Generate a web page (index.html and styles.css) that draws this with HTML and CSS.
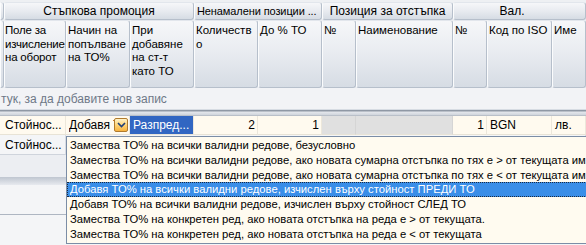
FILE: index.html
```html
<!DOCTYPE html>
<html lang="bg">
<head>
    <meta charset="UTF-8">
    <title>Стъпкова промоция</title>
    <link rel="stylesheet" href="styles.css">
</head>
<body>

    <div class="grid">
        <!-- групи колони -->
        <div class="band ind"></div>
        <div class="band span3">Стъпкова промоция</div>
        <div class="band span2 left">Ненамалени позиции ...</div>
        <div class="band span2">Позиция за отстъпка</div>
        <div class="band span3 val">Вал.</div>

        <!-- колони -->
        <div class="head ind"></div>
        <div class="head tight">Поле за<br>изчисление<br>на оборот</div>
        <div class="head">Начин на<br>попълване<br>на ТО%</div>
        <div class="head">При<br>добавяне<br>на ст-т<br>като ТО</div>
        <div class="head">Количеств<br>о</div>
        <div class="head">До % ТО</div>
        <div class="head">№</div>
        <div class="head">Наименование</div>
        <div class="head">№</div>
        <div class="head">Код по ISO</div>
        <div class="head">Име</div>

        <div class="newrow">тук, за да добавите нов запис</div>
        <div class="sep"></div>

        <!-- ред 1 -->
        <div class="cell"></div>
        <div class="cell first">Стойнос...</div>
        <div class="cell combo">
            <span class="combo-text">Добавя ТО%</span>
            <span class="combo-btn">
                <svg width="9" height="6" viewBox="0 0 9 6"><path d="M1 1 L4.5 4.5 L8 1" fill="none" stroke="#1e3f7a" stroke-width="1.6"/></svg>
            </span>
        </div>
        <div class="cell selected">Разпред...</div>
        <div class="cell num">2</div>
        <div class="cell num">1</div>
        <div class="cell off"></div>
        <div class="cell off"></div>
        <div class="cell num">1</div>
        <div class="cell">BGN</div>
        <div class="cell">лв.</div>

        <!-- ред 2 -->
        <div class="cell r2"></div>
        <div class="cell r2 first">Стойнос...</div>
        <div class="cell r2 rest"></div>

        <div class="footer">
            <div class="f1"></div>
            <div class="f2"></div>
            <div class="f3"></div>
            <div class="f4"></div>
        </div>

        <!-- падащ списък -->
        <div class="popup">
            <div class="item">Замества ТО% на всички валидни редове, безусловно</div>
            <div class="item">Замества ТО% на всички валидни редове, ако новата сумарна отстъпка по тях е &gt; от текущата им</div>
            <div class="item">Замества ТО% на всички валидни редове, ако новата сумарна отстъпка по тях е &lt; от текущата им</div>
            <div class="item active">Добавя ТО% на всички валидни редове, изчислен върху стойност ПРЕДИ ТО</div>
            <div class="item">Добавя ТО% на всички валидни редове, изчислен върху стойност СЛЕД ТО</div>
            <div class="item">Замества ТО% на конкретен ред, ако новата отстъпка на реда е &gt; от текущата.</div>
            <div class="item">Замества ТО% на конкретен ред, ако новата отстъпка на реда е &lt; от текущата</div>
        </div>
    </div>

</body>
</html>
```

FILE: styles.css
```css
/* Грид в стил DevExpress */
body {
    margin: 0;
    background-color: #eef0f3;
    font-family: "Liberation Sans", Arial, sans-serif;
    font-size: 12px;
    color: #000;
}

.grid {
    position: relative;
    width: 586px;
    height: 245px;
    overflow: hidden;
    display: grid;
    grid-template-columns: 4px 62px 64px 64px 64px 64px 34px 97px 34px 65px 34px;
    grid-template-rows: 20px 68px 22px 6px 19px 20px 1fr;
    background-color: #eef0f3;
}

/* заглавия */
.band,
.head {
    box-sizing: border-box;
    background: linear-gradient(to bottom, #f6f7f9 0%, #e8ebf0 50%, #d6dce4 100%);
    border: 1px solid #b6bfcb;
    border-top-color: #e2e6ec;
    border-left-color: #fbfcfd;
    border-radius: 3px;
    overflow: hidden;
    white-space: nowrap;
}

.band {
    margin-top: 2px;
    text-align: center;
    line-height: 16px;
}

.band.left {
    text-align: left;
    padding-left: 2px;
    font-size: 11px;
    letter-spacing: -0.1px;
}

.band.val {
    padding-right: 15px;
}

.span3 { grid-column: span 3; }
.span2 { grid-column: span 2; }

.head {
    padding: 3px 0 0 1px;
    line-height: 13.5px;
    font-size: 11.5px;
}

.head.tight {
    padding-left: 0;
    letter-spacing: -0.2px;
}

.ind {
    border-radius: 0 3px 3px 0;
}

.newrow {
    grid-column: 1 / -1;
    background-color: #f2f3f6;
    color: #6e7887;
    line-height: 22px;
    padding-left: 1px;
    border-bottom: 1px solid #d7dce3;
}

.sep {
    grid-column: 1 / -1;
    background: linear-gradient(to bottom, #8f98a5 0px, #8f98a5 1px, #e4e7ec 2px, #cfd4dc 5px, #a4acb7 6px);
}

/* редове */
.cell {
    background-color: #fffaef;
    border-right: 1px solid #ece7db;
    border-bottom: 1px solid #e8e3d6;
    padding: 0 2px 0 3px;
    line-height: 19px;
    white-space: nowrap;
    overflow: hidden;
}

.cell.first {
    padding-left: 1px;
}

.cell.num {
    text-align: right;
}

.cell.off {
    background-color: #e0e0e0;
    border-right-color: #d5d5d5;
}

.cell.selected {
    background-color: #3166c2;
    color: #fff;
}

.combo {
    display: flex;
    align-items: center;
    padding-right: 1px;
}

.combo-text {
    flex: 1;
    min-width: 0;
    overflow: hidden;
    white-space: nowrap;
}

.combo-btn {
    flex: none;
    width: 14px;
    height: 14px;
    box-sizing: border-box;
    border: 1px solid #b07a2c;
    border-radius: 2px;
    background: linear-gradient(to bottom, #fff2c8 0%, #ffd477 50%, #f7b33f 100%);
    display: flex;
    align-items: center;
    justify-content: center;
}

.cell.r2 {
    background-color: #f4f5f7;
    border-right-color: #d8dce3;
    border-bottom-color: #cfd4dc;
    line-height: 20px;
}

.cell.rest {
    grid-column: 3 / -1;
}

.footer {
    grid-column: 1 / -1;
    display: flex;
    flex-direction: column;
}

.f1 {
    height: 22px;
    background-color: #eceef2;
}

.f2 {
    height: 8px;
    background: linear-gradient(to bottom, #bfc6d0, #e7eaef);
}

.f3 {
    height: 29px;
    background-color: #f4f5f7;
    border-bottom: 1px solid #aeb6c2;
}

.f4 {
    flex: 1;
    background-color: #f4f5f7;
}

/* падащ списък */
.popup {
    position: absolute;
    left: 66px;
    top: 136px;
    width: 530px;
    height: 105px;
    background-color: #fffbf0;
    border: 1px solid #7b8da6;
    padding-top: 1px;
}

.item {
    height: 14.8px;
    line-height: 14.8px;
    padding-left: 3px;
    font-size: 11.25px;
    white-space: nowrap;
}

.item.active {
    background-color: #3a8ee8;
    color: #fff;
    outline: 1px dotted #1a2a40;
    outline-offset: -1px;
}
```
